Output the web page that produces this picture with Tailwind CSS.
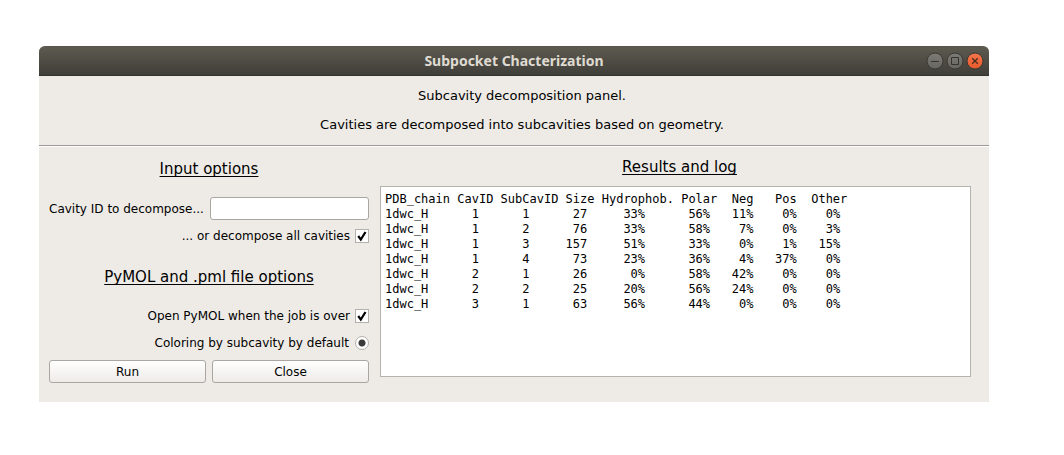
<!DOCTYPE html>
<html lang="en">
<head>
<meta charset="utf-8">
<meta name="viewport" content="width=device-width, initial-scale=1">
<title>Subpocket Chacterization</title>
<script src="https://cdn.jsdelivr.net/npm/@tailwindcss/browser@4"></script>
</head>
<body class="bg-white pt-[46px] pr-[75px] pb-[53px] pl-[39px] font-['DejaVu_Sans',sans-serif] text-xs text-black">
<main class="bg-[#eeebe6] rounded-t-md">
  <header class="grid grid-cols-[1fr_auto_1fr] items-center h-[30px] pl-[5px] pr-[5px] rounded-t-md border-t border-b border-t-[#57554e] border-b-[#33322e] bg-linear-to-b from-[#5d5a4f] to-[#3f3e39]">
    <span></span>
    <h1 class="font-['Noto_Sans',sans-serif] font-bold text-[14px] leading-5 text-[#dfdbd2]">Subpocket Chacterization</h1>
    <div class="flex justify-end gap-[2px]">
      <button type="button" aria-label="Minimize" class="size-[18px]">
        <svg viewBox="0 0 18 18" class="block size-full"><defs><linearGradient id="g" x2="0" y2="1"><stop stop-color="#7d7b75"/><stop offset="1" stop-color="#666560"/></linearGradient></defs><circle cx="9" cy="9" r="8" fill="url(#g)" stroke="#3a3934"/><path d="M5 9.500h8" stroke="#34332e" fill="none"/></svg>
      </button>
      <button type="button" aria-label="Maximize" class="size-[18px]">
        <svg viewBox="0 0 18 18" class="block size-full"><circle cx="9" cy="9" r="8" fill="url(#g)" stroke="#3a3934"/><path d="M5.500 5.500h7v7h-7z" stroke="#34332e" fill="none"/></svg>
      </button>
      <button type="button" aria-label="Close window" class="size-[18px]">
        <svg viewBox="0 0 18 18" class="block size-full"><defs><linearGradient id="o" x2="0" y2="1"><stop stop-color="#f4764d"/><stop offset="1" stop-color="#e85a2a"/></linearGradient></defs><circle cx="9" cy="9" r="8" fill="url(#o)" stroke="#3a3934"/><path d="M6.200 6.200l5.600 5.600M11.800 6.200l-5.600 5.600" stroke="#4a2c1e" stroke-width="1.300" fill="none"/></svg>
      </button>
    </div>
  </header>

  <section class="text-center text-[13px] leading-5 pt-[10px] pb-[10px] pl-4 space-y-[9px] border-b border-[#9a9996]">
    <p>Subcavity decomposition panel.</p>
    <p>Cavities are decomposed into subcavities based on geometry.</p>
  </section>

  <div class="flex gap-[11px] px-[10px] pb-[19px] border-t border-white">
    <form class="w-80 shrink-0 pt-3">
      <h2 class="text-center text-[15px] leading-5 underline underline-offset-2 decoration-1 [text-decoration-skip-ink:none]">Input options</h2>
      <div class="flex items-center justify-between mt-[18px]">
        <label for="cavity">Cavity ID to decompose...</label>
        <input id="cavity" type="text" class="w-[159px] h-[23px] px-1 bg-white border border-[#aaa6a2] rounded-[3px]">
      </div>
      <div class="flex items-center justify-end gap-[5px] mt-2 h-4">
        <label for="all">... or decompose all cavities</label>
        <span class="grid size-[14px]">
          <input id="all" type="checkbox" checked class="peer appearance-none size-[14px] bg-white border border-[#b4b0ac] col-start-1 row-start-1">
          <svg viewBox="0 0 14 14" class="size-[14px] col-start-1 row-start-1 pointer-events-none invisible peer-checked:visible"><path d="M3.200 7L5.800 10.500L10.500 3" fill="none" stroke="#000" stroke-width="2.200"/></svg>
        </span>
      </div>
      <h2 class="text-center text-[15px] leading-5 mt-[23px] underline underline-offset-2 decoration-1 [text-decoration-skip-ink:none]">PyMOL and .pml file options</h2>
      <div class="flex items-center justify-end gap-[5px] mt-[21px] h-4">
        <label for="open">Open PyMOL when the job is over</label>
        <span class="grid size-[14px]">
          <input id="open" type="checkbox" checked class="peer appearance-none size-[14px] bg-white border border-[#b4b0ac] col-start-1 row-start-1">
          <svg viewBox="0 0 14 14" class="size-[14px] col-start-1 row-start-1 pointer-events-none invisible peer-checked:visible"><path d="M3.200 7L5.800 10.500L10.500 3" fill="none" stroke="#000" stroke-width="2.200"/></svg>
        </span>
      </div>
      <div class="flex items-center justify-end gap-[6px] mt-[11px] h-4">
        <label for="color">Coloring by subcavity by default</label>
        <input id="color" type="radio" checked class="appearance-none size-[14px] rounded-full border border-[#b4b0ac] bg-white checked:bg-[radial-gradient(circle,#3a3a3a_3px,#fff_4px)]">
      </div>
      <div class="grid grid-cols-2 gap-[6px] mt-[9px]">
        <button type="button" class="h-[23px] border border-[#aaa6a2] rounded-[3px] bg-linear-to-b from-white to-[#eeebe8]">Run</button>
        <button type="button" class="h-[23px] border border-[#aaa6a2] rounded-[3px] bg-linear-to-b from-white to-[#eeebe8]">Close</button>
      </div>
    </form>

    <section class="flex flex-col grow pt-[10px] pb-[6px]">
      <h2 class="text-center text-[15px] leading-5 underline underline-offset-2 decoration-1 [text-decoration-skip-ink:none]">Results and log</h2>
      <div class="grow mt-[9px] mr-2 px-1 pt-[5px] bg-white border border-[#b6b2ae]">
        <table class="table-fixed w-[64ch] font-['DejaVu_Sans_Mono',monospace] text-xs leading-[15px] text-right">
          <colgroup><col class="w-[10ch]"><col class="w-[6ch]"><col class="w-[9ch]"><col class="w-[5ch]"><col class="w-[11ch]"><col class="w-[7ch]"><col class="w-[6ch]"><col class="w-[5ch]"><col class="w-[5ch]"></colgroup>
          <thead class="text-left [&_th]:font-normal">
            <tr><th>PDB_chain</th><th>CavID</th><th>SubCavID</th><th>Size</th><th>Hydrophob.</th><th>Polar</th><th>Neg</th><th>Pos</th><th>Other</th></tr>
          </thead>
          <tbody>
            <tr><td class="text-left">1dwc_H</td><td class="pr-[3ch]">1</td><td class="pr-[5ch]">1</td><td class="pr-[2ch]">27</td><td class="pr-[5ch]">33%</td><td class="pr-[3ch]">56%</td><td class="pr-[3ch]">11%</td><td class="pr-[2ch]">0%</td><td class="pr-[1ch]">0%</td></tr>
            <tr><td class="text-left">1dwc_H</td><td class="pr-[3ch]">1</td><td class="pr-[5ch]">2</td><td class="pr-[2ch]">76</td><td class="pr-[5ch]">33%</td><td class="pr-[3ch]">58%</td><td class="pr-[3ch]">7%</td><td class="pr-[2ch]">0%</td><td class="pr-[1ch]">3%</td></tr>
            <tr><td class="text-left">1dwc_H</td><td class="pr-[3ch]">1</td><td class="pr-[5ch]">3</td><td class="pr-[2ch]">157</td><td class="pr-[5ch]">51%</td><td class="pr-[3ch]">33%</td><td class="pr-[3ch]">0%</td><td class="pr-[2ch]">1%</td><td class="pr-[1ch]">15%</td></tr>
            <tr><td class="text-left">1dwc_H</td><td class="pr-[3ch]">1</td><td class="pr-[5ch]">4</td><td class="pr-[2ch]">73</td><td class="pr-[5ch]">23%</td><td class="pr-[3ch]">36%</td><td class="pr-[3ch]">4%</td><td class="pr-[2ch]">37%</td><td class="pr-[1ch]">0%</td></tr>
            <tr><td class="text-left">1dwc_H</td><td class="pr-[3ch]">2</td><td class="pr-[5ch]">1</td><td class="pr-[2ch]">26</td><td class="pr-[5ch]">0%</td><td class="pr-[3ch]">58%</td><td class="pr-[3ch]">42%</td><td class="pr-[2ch]">0%</td><td class="pr-[1ch]">0%</td></tr>
            <tr><td class="text-left">1dwc_H</td><td class="pr-[3ch]">2</td><td class="pr-[5ch]">2</td><td class="pr-[2ch]">25</td><td class="pr-[5ch]">20%</td><td class="pr-[3ch]">56%</td><td class="pr-[3ch]">24%</td><td class="pr-[2ch]">0%</td><td class="pr-[1ch]">0%</td></tr>
            <tr><td class="text-left">1dwc_H</td><td class="pr-[3ch]">3</td><td class="pr-[5ch]">1</td><td class="pr-[2ch]">63</td><td class="pr-[5ch]">56%</td><td class="pr-[3ch]">44%</td><td class="pr-[3ch]">0%</td><td class="pr-[2ch]">0%</td><td class="pr-[1ch]">0%</td></tr>
          </tbody>
        </table>
      </div>
    </section>
  </div>
</main>
</body>
</html>
